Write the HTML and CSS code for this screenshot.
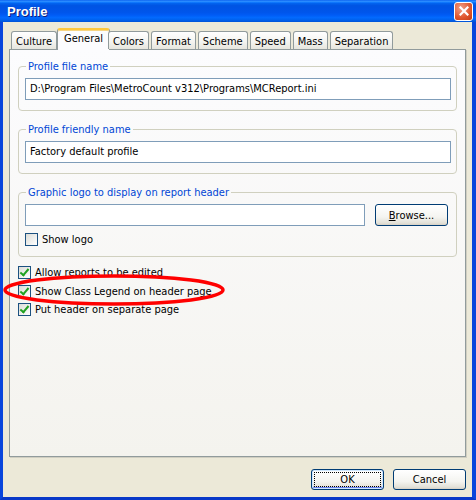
FILE: index.html
```html
<!DOCTYPE html>
<html lang="en">
<head>
    <meta charset="UTF-8">
    <title>Profile</title>
    <link rel="stylesheet" href="styles.css">
</head>
<body>
    <div class="window">
        <div class="titlebar">
            <span class="title">Profile</span>
            <span class="close">
                <svg width="10" height="10" viewBox="0 0 10 10"><path d="M1.5 1.5 L8.5 8.5 M8.5 1.5 L1.5 8.5" stroke="#fff" stroke-width="2.2" stroke-linecap="square"/></svg>
            </span>
        </div>

        <div class="client">
            <div class="tabs">
                <span class="tab">Culture</span>
                <span class="tab active">General</span>
                <span class="tab">Colors</span>
                <span class="tab">Format</span>
                <span class="tab">Scheme</span>
                <span class="tab">Speed</span>
                <span class="tab">Mass</span>
                <span class="tab">Separation</span>
            </div>

            <div class="panel">
                <fieldset class="group">
                    <legend>Profile file name</legend>
                    <div class="field">D:\Program Files\MetroCount v312\Programs\MCReport.ini</div>
                </fieldset>

                <fieldset class="group">
                    <legend>Profile friendly name</legend>
                    <div class="field">Factory default profile</div>
                </fieldset>

                <fieldset class="group group-last">
                    <legend>Graphic logo to display on report header</legend>
                    <div class="field-row">
                        <div class="field field-empty"></div>
                        <button class="btn btn-browse"><u>B</u>rowse...</button>
                    </div>
                    <label class="check"><span class="box"></span>Show logo</label>
                </fieldset>

                <div class="checks">
                    <label class="check"><span class="box checked"></span>Allow reports to be edited</label>
                    <label class="check"><span class="box checked"></span>Show Class Legend on header page</label>
                    <label class="check"><span class="box checked"></span>Put header on separate page</label>
                </div>
            </div>

            <div class="buttons">
                <button class="btn default">OK</button>
                <button class="btn">Cancel</button>
            </div>
        </div>

        <!-- red annotation ring drawn over the dialog -->
        <svg class="ring" width="224" height="34" viewBox="0 0 224 34">
            <ellipse cx="112" cy="17" rx="109" ry="14" fill="none" stroke="#ff0000" stroke-width="3.5"/>
        </svg>
    </div>
</body>
</html>
```

FILE: styles.css
```css
/* XP style dialog */
body { margin: 0; font-family: "DejaVu Sans Condensed", "Liberation Sans", sans-serif; font-size: 11px; color: #000; }

.window { position: relative; width: 476px; height: 500px; display: flex; flex-direction: column; box-sizing: border-box; }

.titlebar { height: 22px; display: flex; align-items: center; justify-content: space-between; padding: 0 3px 0 7px;
    background: linear-gradient(#0058ee 0%, #3593ff 5%, #127dff 10%, #0262ee 16%, #0054e3 26%, #0055eb 56%, #005bf5 68%, #026afe 80%, #0062ef 90%, #0052d6 100%); }
.title { color: #fff; font-family: "Liberation Sans", sans-serif; font-weight: bold; font-size: 13px; text-shadow: 1px 1px #0f1e7a; }
.close { width: 17px; height: 17px; display: flex; align-items: center; justify-content: center; border: 1px solid #fff; border-radius: 3px;
    background: radial-gradient(circle at 35% 30%, #f0a08a, #e0552c 60%, #c33a14); }

.client { flex: 1; display: flex; flex-direction: column; background: #ece9d8; padding-top: 7px;
    border-left: 3px solid #0845dc; border-right: 4px solid #0845dc; border-bottom: 3px solid #0838c8; }

.tabs { display: flex; align-items: flex-end; height: 20px; padding-left: 8px; position: relative; z-index: 1; }
.tab { height: 17px; line-height: 19px; padding: 0 4px; margin-right: 2px; border: 1px solid #919b9c; border-bottom: none;
    border-radius: 3px 3px 0 0; background: linear-gradient(#ffffff, #f3f3ef 60%, #e6e5dd); }
.tab.active { height: 20px; line-height: 17px; margin: 0 0 -1px -2px; padding: 0 6px; border-top: 2px solid #ffc83c;
    box-shadow: inset 0 1px #f7d480; background: #fcfcfe; }
.tab.active + .tab { margin-left: -2px; }

.panel { height: 408px; box-sizing: border-box; margin: 0 6px; padding: 10px 8px 0; border: 1px solid #919b9c;
    box-shadow: 1px 1px #d0cec1; background: linear-gradient(#fcfcfe, #f4f3ee); }

.group { margin: 0 0 12px; padding: 5px 5px 10px 6px; border: 1px solid #d0d0bf; border-radius: 4px; min-width: 0; }
.group legend { padding: 0 2px; margin-left: 1px; line-height: 13px; color: #0046d5; }
.group-last { margin-bottom: 9px; }

.field { height: 22px; box-sizing: border-box; padding: 0 4px; line-height: 20px; border: 1px solid #7f9db9; background: #fff; white-space: nowrap; }
.field-empty { flex: 1; }
.field-row { display: flex; gap: 10px; margin-right: 3px; margin-bottom: 7px; }

.check { display: flex; align-items: center; gap: 4px; height: 13px; line-height: 13px; }
.box { width: 13px; height: 13px; box-sizing: border-box; border: 1px solid #1c5180; background: linear-gradient(135deg, #dcdcd7, #fff); position: relative; }
.box.checked::after { content: ""; position: absolute; left: 3px; top: 0; width: 3px; height: 7px;
    border: solid #21a121; border-width: 0 2px 2px 0; transform: rotate(40deg); }

.checks { display: flex; flex-direction: column; gap: 5.5px; }

.btn { width: 73px; height: 21px; padding: 0; font: inherit; color: #000; border: 1px solid #003c74; border-radius: 3px;
    background: linear-gradient(#ffffff, #f4f4f0 60%, #e3e1d8 90%, #d6d0c5); }
.btn.default { box-shadow: inset 0 0 0 1px #cee7ff, inset 0 -1px 0 1px #6982ee; outline: 1px dotted #000; outline-offset: -4px; }
.btn-browse { width: 73px; height: 22px; }

.buttons { display: flex; justify-content: flex-end; gap: 9px; margin: 12px 6px 0 0; }

.ring { position: absolute; left: 2px; top: 273px; }
```
